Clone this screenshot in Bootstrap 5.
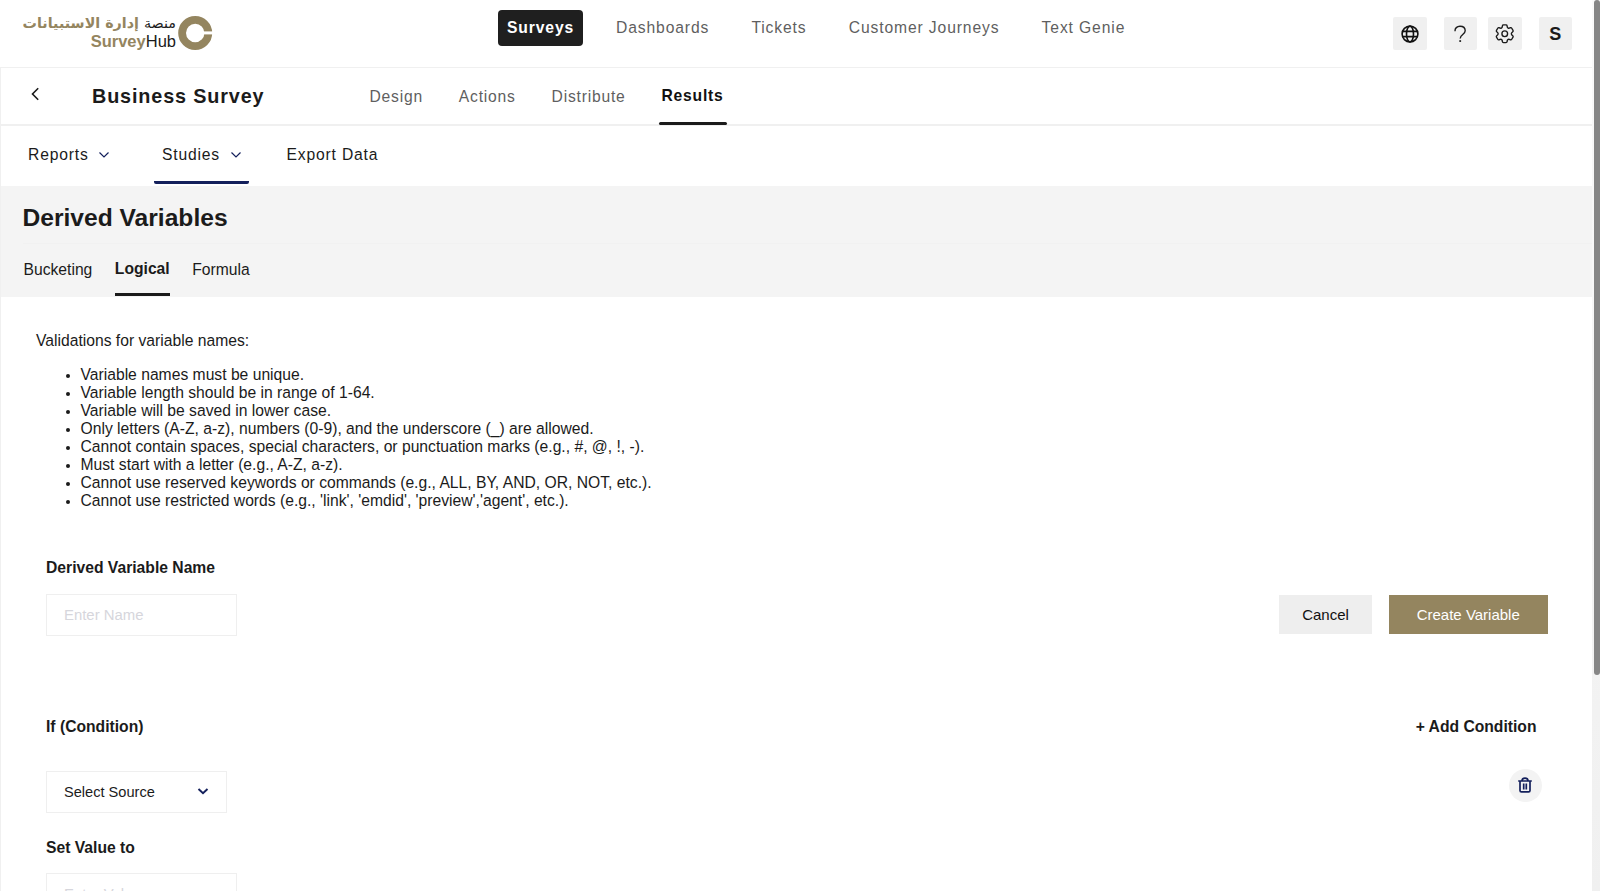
<!DOCTYPE html>
<html lang="en">
<head>
<meta charset="utf-8">
<meta name="viewport" content="width=device-width, initial-scale=1">
<title>SurveyHub - Derived Variables</title>
<link href="https://cdn.jsdelivr.net/npm/bootstrap@5.3.0/dist/css/bootstrap.min.css" rel="stylesheet">
<style>
  :root { --ink: #1b1b1b; --gold: #94855f; --navy: #14205c; --line: #f0f0f0; --panel: #f4f4f4; }
  html, body { height: 100%; overflow: hidden; }
  body { font-family: "Liberation Sans", Arial, sans-serif; font-size: 15.68px; line-height: 18px; color: var(--ink); background: #fff; }
  a { color: inherit; text-decoration: none; }
  svg { display: block; flex: none; }
  .page { height: 891px; overflow: hidden; }
  .scroll-track { width: 8px; background: linear-gradient(#fafafa, #f0f0f0); padding-left: 2px; }
  .scroll-thumb { height: 675px; background: #868686; border-radius: 3px; }

  .topbar { height: 68px; border-bottom: 1px solid var(--line); padding-right: 20px; }
  .brand { width: 498px; padding: 15px 0 0 22px; gap: 2px; }
  .brand-text { width: 154px; color: var(--gold); text-align: right; white-space: nowrap; }
  .brand-ar { font: 700 14.3px/17px "DejaVu Sans", sans-serif; direction: rtl; }
  .brand-ar span { font-weight: 400; color: var(--ink); }
  .brand-en { font-size: 16.5px; line-height: 19px; font-weight: 700; }
  .brand-en span { font-weight: 400; color: var(--ink); }
  .mainnav { gap: 26.2px; padding-top: 10px; letter-spacing: .87px; color: #5f5f5f; }
  .mainnav .nav-link { padding: 0 8px; height: 36px; line-height: 35px; color: inherit; white-space: nowrap; }
  .mainnav .nav-link.active { background: #1f1f1f; color: #fff; font-weight: 700; border-radius: 4px; width: 84.5px; padding-left: 9px; margin-right: -.7px; }
  .tool { width: 33.5px; height: 33px; background: var(--line); border-radius: 2px; font-weight: 700; font-size: 18px; }

  .framed { border-left: 1px solid var(--line); }
  .surveybar { height: 58px; border-bottom: 2px solid var(--line); letter-spacing: .78px; }
  .survey-title { width: 277.5px; font-size: 19.8px; font-weight: 700; line-height: 56px; margin: 0; letter-spacing: .87px; }
  .surveybar .nav-link { padding: 0; color: #5f5f5f; line-height: 57px; height: 57px; border-bottom: 0; }
  .surveybar .nav-link.active { color: #111; font-weight: 700; padding: 0 3px; margin-left: -3px; line-height: 56px; position: relative; }
  .surveybar .nav-link.active::after { content: ""; position: absolute; left: 0; right: 0; bottom: 0; height: 3px; border-radius: 2px; background: var(--ink); }

  .subbar { height: 60px; letter-spacing: .82px; padding-left: 26px; }
  .subbar .nav-link { color: inherit; padding: 0 0 1px 1px; height: 58px; display: flex; align-items: center; }
  .subbar .nav-link.active { border-bottom: 3px solid var(--navy); border-radius: 2px; padding: 2px 8px 0 8px; }

  .panel-head { background: var(--panel); height: 111px; padding-left: 22.5px; }
  .panel-head h1 { font-size: 24.6px; font-weight: 700; line-height: 58px; padding-top: 3px; margin: 0 0 0 -1px; height: 58px; border-bottom: 1px solid #f1f1f1; }
  .kind-tabs { gap: 22.5px; }
  .kind-tabs .nav-link { padding: 0; color: inherit; line-height: 51px; height: 53px; }
  .kind-tabs .nav-link.active { font-weight: 700; line-height: 49px; height: 52px; border-bottom: 3px solid var(--ink); }

  .rules { padding: 35px 0 0 35px; margin: 0; }
  .rule-list { margin: 15.5px 0 0; padding-left: 79.5px; }
  .rule-list li::marker { font-size: 13px; }
  .form-area { padding-left: 45px; padding-right: 44.5px; }
  .form-area strong { display: block; }
  .field { border: 1px solid #efefef; border-radius: 0; height: 42px; width: 191px; padding: 0 17px; font-size: 14.9px; color: var(--ink); background: #fff; }
  .field::placeholder { color: #d6d6dc; opacity: 1; }
  .source { width: 181px; font-size: 14.6px; }
  .act { height: 39.5px; font-size: 15px; border: 0; border-radius: 0; padding: 0; line-height: 39px; }
  .act-cancel { width: 93px; background: #eee; color: #111; }
  .act-create { width: 158.5px; background: var(--gold); color: #fff; }
  .trash { width: 33px; height: 33px; background: #f3f3f3; }
</style>
</head>
<body>
<div class="d-flex">
  <div class="page flex-grow-1">
    <header class="topbar d-flex">
      <a href="#" class="brand d-flex">
        <span class="brand-text">
          <span class="d-block brand-ar"><span>منصة</span> إدارة الاستبيانات</span>
          <span class="d-block brand-en">Survey<span>Hub</span></span>
        </span>
        <svg width="36" height="36" viewBox="0 0 36 36"><circle cx="17.200" cy="18" r="13.100" fill="none" stroke="#94855f" stroke-width="7.800"/><path d="M24 16.400h12v3H24z" fill="#fff"/></svg>
      </a>
      <nav class="mainnav nav flex-nowrap align-items-start">
        <a class="nav-link active" href="#">Surveys</a>
        <a class="nav-link" href="#">Dashboards</a>
        <a class="nav-link" href="#">Tickets</a>
        <a class="nav-link" href="#">Customer Journeys</a>
        <a class="nav-link" href="#">Text Genie</a>
      </nav>
      <div class="d-flex align-items-center ms-auto">
        <a href="#" class="tool d-flex align-items-center justify-content-center" aria-label="Language">
          <svg width="18" height="18" viewBox="0 0 18 18" fill="none" stroke="#111" stroke-width="1.600"><circle cx="9" cy="9" r="7.900"/><ellipse cx="9" cy="9" rx="3.500" ry="7.900"/><path d="M1.600 6.400h14.800M1.600 11.600h14.800"/></svg>
        </a>
        <a href="#" class="tool d-flex align-items-center justify-content-center" style="margin-left:17px" aria-label="Help">
          <svg width="14" height="18" viewBox="0 0 14 18" fill="none" stroke="#1b1b1b" stroke-width="1.400"><path d="M2 6.200C1.800 3.200 4 1.300 7 1.300s5.200 1.800 5.200 4.500c0 3.600-5 3.800-5 7.600"/><path d="M7.200 15.200v1.700" stroke-width="1.800"/></svg>
        </a>
        <a href="#" class="tool d-flex align-items-center justify-content-center" style="margin-left:11px" aria-label="Settings">
          <svg width="23.500" height="23.500" viewBox="0 0 24 24" fill="none" stroke="#1b1b1b" stroke-width="1.400" stroke-linejoin="round"><path d="M9.594 3.94c.09-.542.56-.94 1.11-.94h2.593c.55 0 1.02.398 1.11.94l.213 1.281c.063.374.313.686.645.87.074.04.147.083.22.127.325.196.72.257 1.075.124l1.217-.456a1.125 1.125 0 0 1 1.37.49l1.296 2.247a1.125 1.125 0 0 1-.26 1.431l-1.003.827c-.293.241-.438.613-.43.992a7.723 7.723 0 0 1 0 .255c-.008.378.137.75.43.991l1.004.827c.424.35.534.955.26 1.43l-1.298 2.247a1.125 1.125 0 0 1-1.369.491l-1.217-.456c-.355-.133-.75-.072-1.076.124a6.47 6.47 0 0 1-.22.128c-.331.183-.581.495-.644.869l-.213 1.281c-.09.543-.56.94-1.11.94h-2.594c-.55 0-1.019-.398-1.11-.94l-.213-1.281c-.062-.374-.312-.686-.644-.87a6.52 6.52 0 0 1-.22-.127c-.325-.196-.72-.257-1.076-.124l-1.217.456a1.125 1.125 0 0 1-1.369-.49l-1.297-2.247a1.125 1.125 0 0 1 .26-1.431l1.004-.827c.292-.24.437-.613.43-.991a6.932 6.932 0 0 1 0-.255c.007-.38-.138-.751-.43-.992l-1.004-.827a1.125 1.125 0 0 1-.26-1.43l1.297-2.247a1.125 1.125 0 0 1 1.37-.491l1.216.456c.356.133.751.072 1.076-.124.072-.044.146-.086.22-.128.332-.183.582-.495.644-.869l.214-1.28Z"/><circle cx="12" cy="12" r="2.900"/></svg>
        </a>
        <a href="#" class="tool d-flex align-items-center justify-content-center" style="margin-left:17px">S</a>
      </div>
    </header>

    <div class="framed">
      <div class="surveybar d-flex">
        <a href="#" class="back" aria-label="Back" style="width:91px"><svg width="9" height="14" viewBox="0 0 9 14" style="margin:19px 0 0 30px" fill="none" stroke="#1b1b1b" stroke-width="1.600"><path d="M7.200 1.200 1.500 7l5.700 5.800"/></svg></a>
        <h2 class="survey-title">Business Survey</h2>
        <nav class="nav flex-nowrap" style="gap:35.900px">
          <a class="nav-link" href="#">Design</a>
          <a class="nav-link" href="#">Actions</a>
          <a class="nav-link" href="#">Distribute</a>
          <a class="nav-link active" href="#">Results</a>
        </nav>
      </div>

      <nav class="subbar nav flex-nowrap">
        <a class="nav-link" href="#" style="width:127px">Reports <svg width="12" height="8" viewBox="0 0 12 8" style="margin-left:9.500px" fill="none" stroke="#14205c" stroke-width="1.200"><path d="m1.500 1.500 4.500 4.500 4.500-4.500"/></svg></a>
        <a class="nav-link active" href="#" style="width:94.500px">Studies <svg width="12" height="8" viewBox="0 0 12 8" style="margin-left:9.500px" fill="none" stroke="#14205c" stroke-width="1.200"><path d="m1.500 1.500 4.500 4.500 4.500-4.500"/></svg></a>
        <a class="nav-link" href="#" style="margin-left:37px">Export Data</a>
      </nav>

      <section class="panel-head">
        <h1>Derived Variables</h1>
        <nav class="kind-tabs nav">
          <a class="nav-link" href="#">Bucketing</a>
          <a class="nav-link active" href="#">Logical</a>
          <a class="nav-link" href="#">Formula</a>
        </nav>
      </section>

      <p class="rules">Validations for variable names:</p>
      <ul class="rule-list">
        <li>Variable names must be unique.</li>
        <li>Variable length should be in range of 1-64.</li>
        <li>Variable will be saved in lower case.</li>
        <li>Only letters (A-Z, a-z), numbers (0-9), and the underscore (_) are allowed.</li>
        <li>Cannot contain spaces, special characters, or punctuation marks (e.g., #, @, !, -).</li>
        <li>Must start with a letter (e.g., A-Z, a-z).</li>
        <li>Cannot use reserved keywords or commands (e.g., ALL, BY, AND, OR, NOT, etc.).</li>
        <li>Cannot use restricted words (e.g., 'link', 'emdid', 'preview','agent', etc.).</li>
      </ul>

      <form class="form-area">
        <strong style="margin-top:49px">Derived Variable Name</strong>
        <div class="d-flex justify-content-between align-items-center" style="margin-top:17px">
          <input class="field" type="text" placeholder="Enter Name">
          <div class="d-flex" style="gap:17px">
            <button type="button" class="btn act act-cancel">Cancel</button>
            <button type="button" class="btn act act-create">Create Variable</button>
          </div>
        </div>
        <div class="d-flex justify-content-between" style="margin-top:82.500px;padding-right:11px">
          <strong>If (Condition)</strong>
          <strong>+ Add Condition</strong>
        </div>
        <div class="d-flex justify-content-between align-items-start" style="margin-top:34.500px;padding-right:6px">
          <div class="field source d-flex align-items-center justify-content-between">Select Source
            <svg width="12" height="9" viewBox="0 0 12 9" fill="none" stroke="#14205c" stroke-width="1.900"><path d="m1.500 2 4.500 4.300L10.500 2"/></svg>
          </div>
          <a href="#" class="trash rounded-circle d-flex align-items-center justify-content-center" style="margin-top:-2px" aria-label="Delete">
            <svg width="16" height="16" viewBox="0 0 16 16" fill="none" stroke="#14205c" stroke-width="1.700"><path d="M1.200 4h13.600M3 4v9.500c0 .9.500 1.400 1.400 1.400h7.200c.9 0 1.400-.5 1.400-1.400V4M5 3.500C5.200 1.800 6.200 1.200 8 1.200s2.800.6 3 2.300M6.700 6.500v6M9.300 6.500v6"/></svg>
          </a>
        </div>
        <strong style="margin-top:26.500px">Set Value to</strong>
        <input class="field d-block" style="margin-top:16px" type="text" placeholder="Enter Value">
      </form>
    </div>
  </div>
  <div class="scroll-track"><div class="scroll-thumb"></div></div>
</div>
<script src="https://cdn.jsdelivr.net/npm/bootstrap@5.3.0/dist/js/bootstrap.bundle.min.js"></script>
</body>
</html>
